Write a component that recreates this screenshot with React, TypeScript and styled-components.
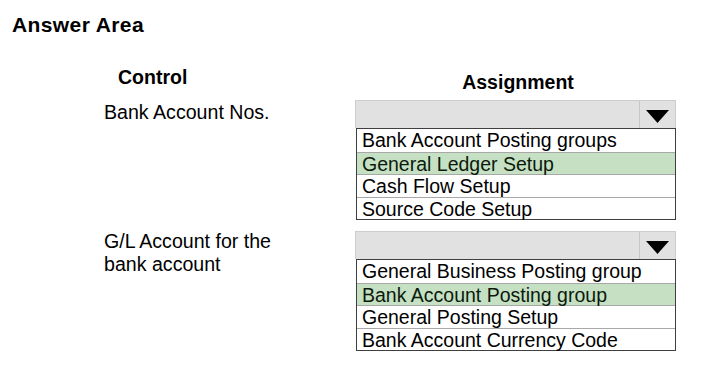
import styled, { createGlobalStyle } from "styled-components";

interface Choice {
  label: string;
  picked?: boolean;
}

interface Question {
  control: string[];
  shift: number; // label nudge, px
  gap: number; // space above the row
  choices: Choice[];
}

const questions: Question[] = [
  {
    control: ["Bank Account Nos."],
    shift: 1,
    gap: 0,
    choices: [
      { label: "Bank Account Posting groups" },
      { label: "General Ledger Setup", picked: true },
      { label: "Cash Flow Setup" },
      { label: "Source Code Setup" },
    ],
  },
  {
    control: ["G/L Account for the", "bank account"],
    shift: -1,
    gap: 11,
    choices: [
      { label: "General Business Posting group" },
      { label: "Bank Account Posting group", picked: true },
      { label: "General Posting Setup" },
      { label: "Bank Account Currency Code" },
    ],
  },
];

const GlobalStyle = createGlobalStyle`
  body {
    margin: 0;
    background: #fff;
    color: #000;
    font-family: "Liberation Sans", Arial, sans-serif;
  }
`;

const Page = styled.div`
  width: 717px;
  height: 375px;
  overflow: hidden;
`;

const Title = styled.h1`
  margin: 13px 0 0 12px;
  font-size: 21px;
  font-weight: bold;
  line-height: 24px;
  letter-spacing: 0.4px;
`;

const HeadRow = styled.div`
  display: grid;
  grid-template-columns: 251px 321px;
  margin: 29px 0 0 104px;
  height: 34px;
`;

const ColumnHead = styled.div<{ $pad: number; $center?: boolean }>`
  padding-top: ${({ $pad }) => $pad}px;
  padding-left: ${({ $center }) => ($center ? 5 : 14)}px;
  text-align: ${({ $center }) => ($center ? "center" : "left")};
  font-size: 19.5px;
  font-weight: bold;
  line-height: 22px;
`;

const ItemRow = styled.div<{ $gap: number }>`
  display: grid;
  grid-template-columns: 251px 321px;
  margin: ${({ $gap }) => $gap}px 0 0 104px;
`;

const Label = styled.div<{ $shift: number }>`
  margin-top: ${({ $shift }) => $shift}px;
  font-size: 19.6px;
  line-height: 23px;
`;

const Dropdown = styled.div`
  display: flex;
  flex-direction: column;
`;

const Field = styled.div`
  display: flex;
  height: 28px;
  box-sizing: border-box;
  background: #e1e1e1;
  border: 1px solid #cdcdcd;
  border-bottom: none;
`;

const FieldValue = styled.div`
  flex: 1;
`;

const ArrowBox = styled.div`
  width: 36px;
  display: flex;
  justify-content: center;
  padding-top: 9px;
  box-sizing: border-box;
  border-left: 1px solid #c6c6c6;
`;

const List = styled.div`
  margin-left: 1px;
  width: 320px;
  box-sizing: border-box;
  border: 1px solid #3f3f3f;
`;

const Option = styled.div<{ $picked?: boolean }>`
  height: 22.5px;
  box-sizing: border-box;
  padding-left: 5px;
  font-size: 19.5px;
  line-height: 22px;
  white-space: nowrap;
  background: ${({ $picked }) => ($picked ? "#c6e0c4" : "#fff")};
  color: ${({ $picked }) => ($picked ? "#0c1a0c" : "#000")};

  & + & {
    border-top: 1px solid #a8a8a8;
  }
`;

function Arrow() {
  return (
    <svg width="23" height="13" viewBox="0 0 23 13">
      <polygon points="0,0 23,0 11.5,13" fill="#000" />
    </svg>
  );
}

export default function App() {
  return (
    <Page>
      <GlobalStyle />
      <Title>Answer Area</Title>

      <HeadRow>
        <ColumnHead $pad={0}>Control</ColumnHead>
        <ColumnHead $pad={5} $center>
          Assignment
        </ColumnHead>
      </HeadRow>

      {questions.map((q, i) => (
        <ItemRow key={i} $gap={q.gap}>
          <Label $shift={q.shift}>
            {q.control.map((line) => (
              <div key={line}>{line}</div>
            ))}
          </Label>
          <Dropdown>
            <Field>
              <FieldValue />
              <ArrowBox>
                <Arrow />
              </ArrowBox>
            </Field>
            <List>
              {q.choices.map((c) => (
                <Option key={c.label} $picked={c.picked}>
                  {c.label}
                </Option>
              ))}
            </List>
          </Dropdown>
        </ItemRow>
      ))}
    </Page>
  );
}
